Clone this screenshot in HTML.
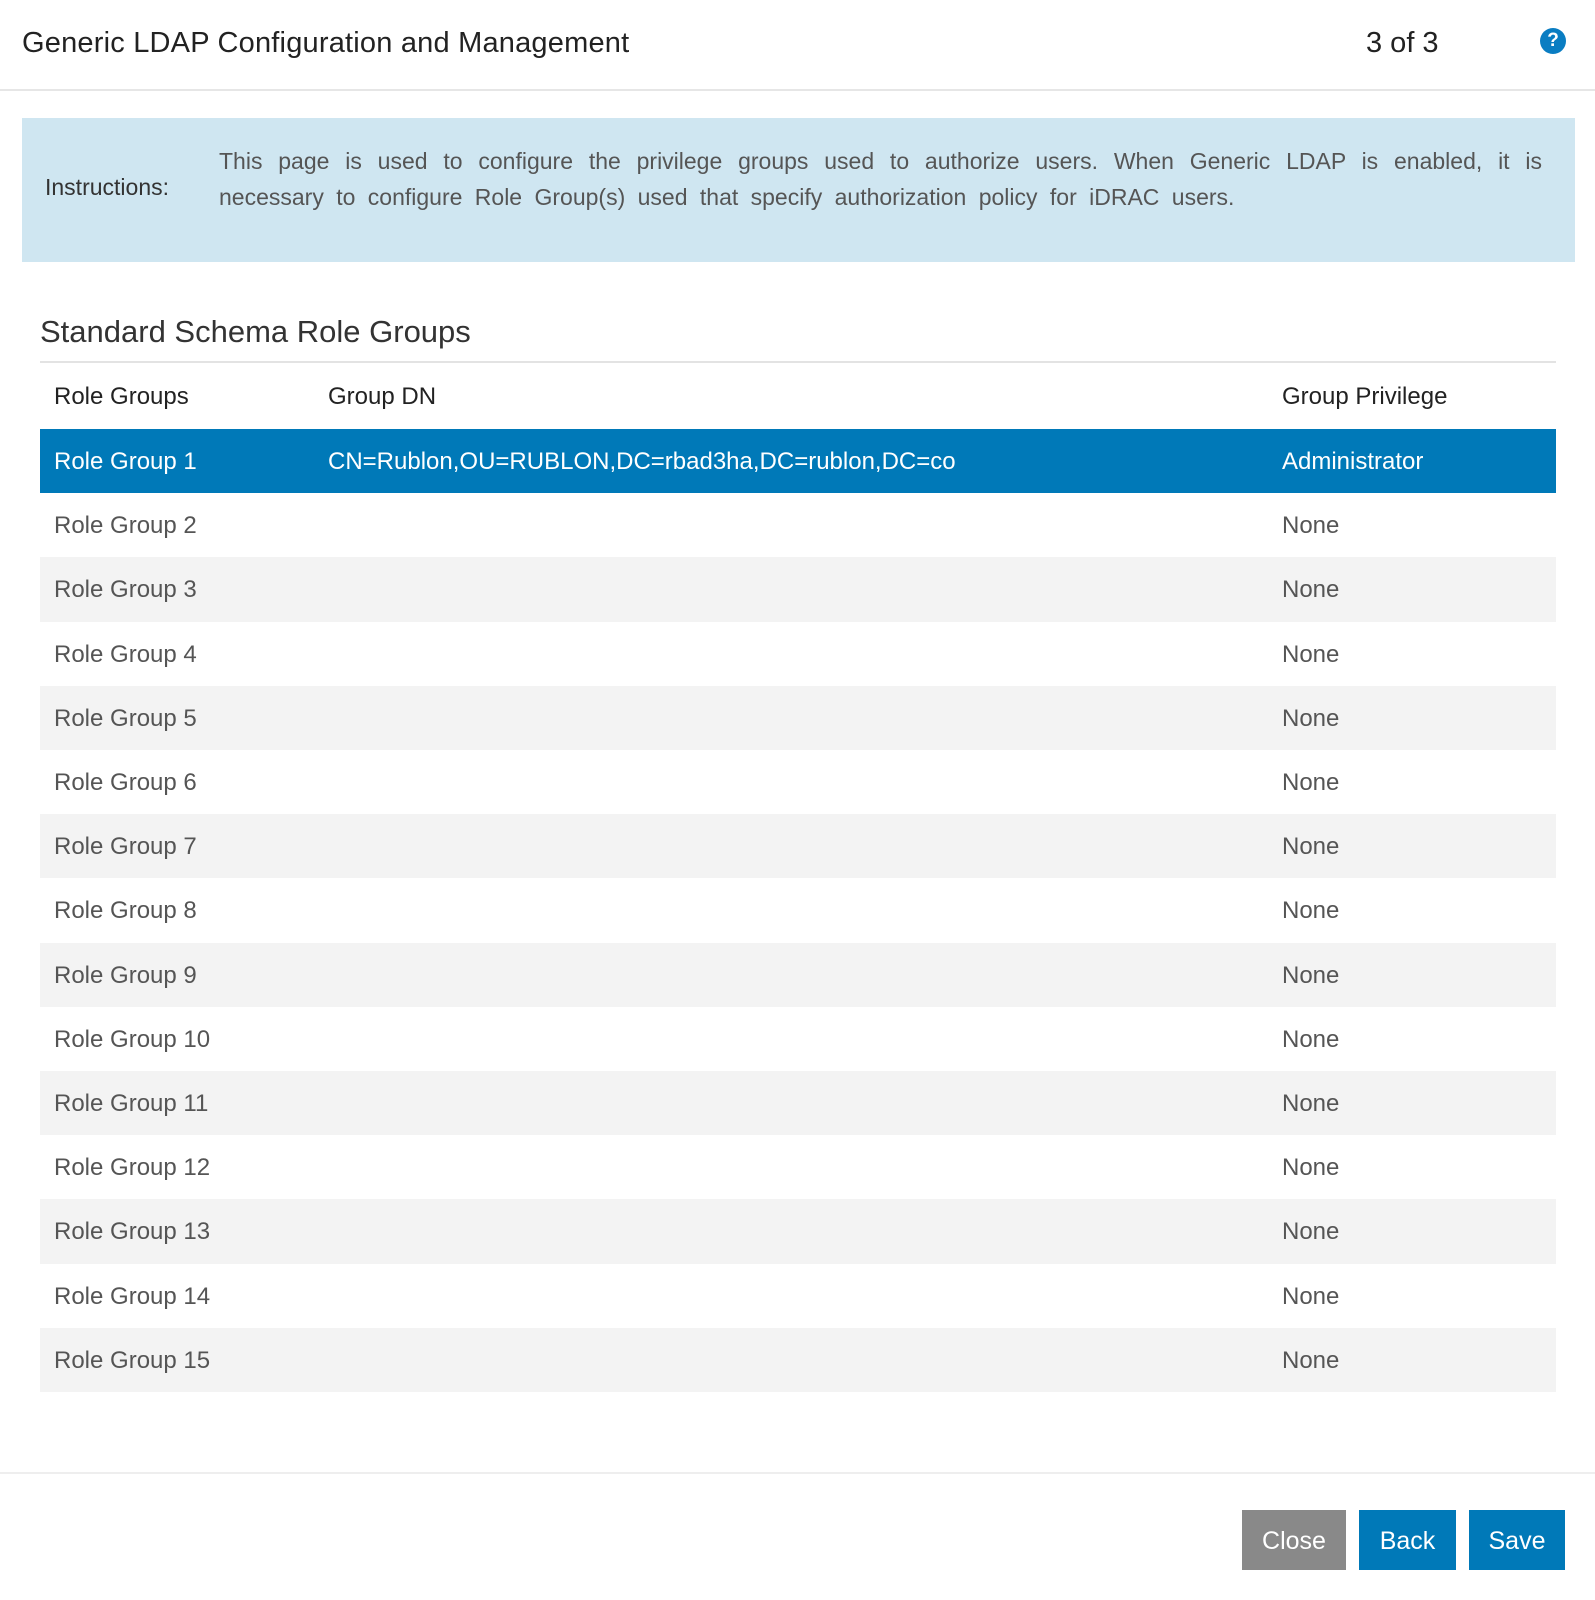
<!DOCTYPE html>
<html><head><meta charset="utf-8"><style>
*{margin:0;padding:0;box-sizing:border-box}
body{width:1595px;height:1600px;background:#fff;font-family:"Liberation Sans",sans-serif;position:relative;overflow:hidden;color:#444}
.abs{position:absolute}
.title{left:22px;top:27px;font-size:29px;color:#222;letter-spacing:0.2px}
.pg{left:1366px;top:27px;font-size:29px;color:#222}
.help{left:1540px;top:28px;width:26px;height:26px;border-radius:50%;background:#0a7dc2;color:#fff;font-weight:bold;font-size:19px;text-align:center;line-height:26px}
.hline{left:0;top:89px;width:1595px;height:2px;background:#e6e6e6}
.inst{left:22px;top:118px;width:1553px;height:144px;background:#cfe6f1}
.il{left:23px;top:56px;font-size:23px;color:#333}
.it{left:197px;top:25px;width:1323px;font-size:23px;line-height:36px;text-align:justify;text-align-last:left;color:#555;word-spacing:6px}
.h2{left:40px;top:314px;font-size:31px;color:#333}
.sline{left:40px;top:361px;width:1516px;height:2px;background:#e3e3e3}
.row{position:absolute;left:40px;width:1516px;height:64.2px;font-size:24px;color:#555}
.row span{position:absolute;top:50%;transform:translateY(-46%)}
.c1{left:14px}.c2{left:288px}.c3{left:1242px}
.g{background:#f3f3f3}
.sel{background:#0079b8;color:#fff}
.hdr{color:#222}
.fline{left:0;top:1472px;width:1595px;height:2px;background:#eee}
.btn{top:1510px;height:60px;color:#fff;font-size:25px;text-align:center;line-height:62px}
</style></head><body>
<div class="abs title">Generic LDAP Configuration and Management</div>
<div class="abs pg">3 of 3</div>
<div class="abs help">?</div>
<div class="abs hline"></div>
<div class="abs inst">
<div class="abs il">Instructions:</div>
<div class="abs it">This page is used to configure the privilege groups used to authorize users. When Generic LDAP is enabled, it is necessary to configure Role Group(s) used that specify authorization policy for iDRAC users.</div>
</div>
<div class="abs h2">Standard Schema Role Groups</div>
<div class="abs sline"></div>
<div class="row hdr" style="top:364px"><span class="c1">Role Groups</span><span class="c2">Group DN</span><span class="c3">Group Privilege</span></div>
<div class="row sel" style="top:429px"><span class="c1">Role Group 1</span><span class="c2">CN=Rublon,OU=RUBLON,DC=rbad3ha,DC=rublon,DC=co</span><span class="c3">Administrator</span></div>
<div class="row" style="top:493.2px"><span class="c1">Role Group 2</span><span class="c3">None</span></div>
<div class="row g" style="top:557.4px"><span class="c1">Role Group 3</span><span class="c3">None</span></div>
<div class="row" style="top:621.6px"><span class="c1">Role Group 4</span><span class="c3">None</span></div>
<div class="row g" style="top:685.8px"><span class="c1">Role Group 5</span><span class="c3">None</span></div>
<div class="row" style="top:750px"><span class="c1">Role Group 6</span><span class="c3">None</span></div>
<div class="row g" style="top:814.2px"><span class="c1">Role Group 7</span><span class="c3">None</span></div>
<div class="row" style="top:878.4px"><span class="c1">Role Group 8</span><span class="c3">None</span></div>
<div class="row g" style="top:942.6px"><span class="c1">Role Group 9</span><span class="c3">None</span></div>
<div class="row" style="top:1006.8px"><span class="c1">Role Group 10</span><span class="c3">None</span></div>
<div class="row g" style="top:1071px"><span class="c1">Role Group 11</span><span class="c3">None</span></div>
<div class="row" style="top:1135.2px"><span class="c1">Role Group 12</span><span class="c3">None</span></div>
<div class="row g" style="top:1199.4px"><span class="c1">Role Group 13</span><span class="c3">None</span></div>
<div class="row" style="top:1263.6px"><span class="c1">Role Group 14</span><span class="c3">None</span></div>
<div class="row g" style="top:1327.8px"><span class="c1">Role Group 15</span><span class="c3">None</span></div>
<div class="abs fline"></div>
<div class="abs btn" style="left:1242px;width:104px;background:#898989">Close</div>
<div class="abs btn" style="left:1359px;width:97px;background:#0079b8">Back</div>
<div class="abs btn" style="left:1469px;width:96px;background:#0079b8">Save</div>
</body></html>
